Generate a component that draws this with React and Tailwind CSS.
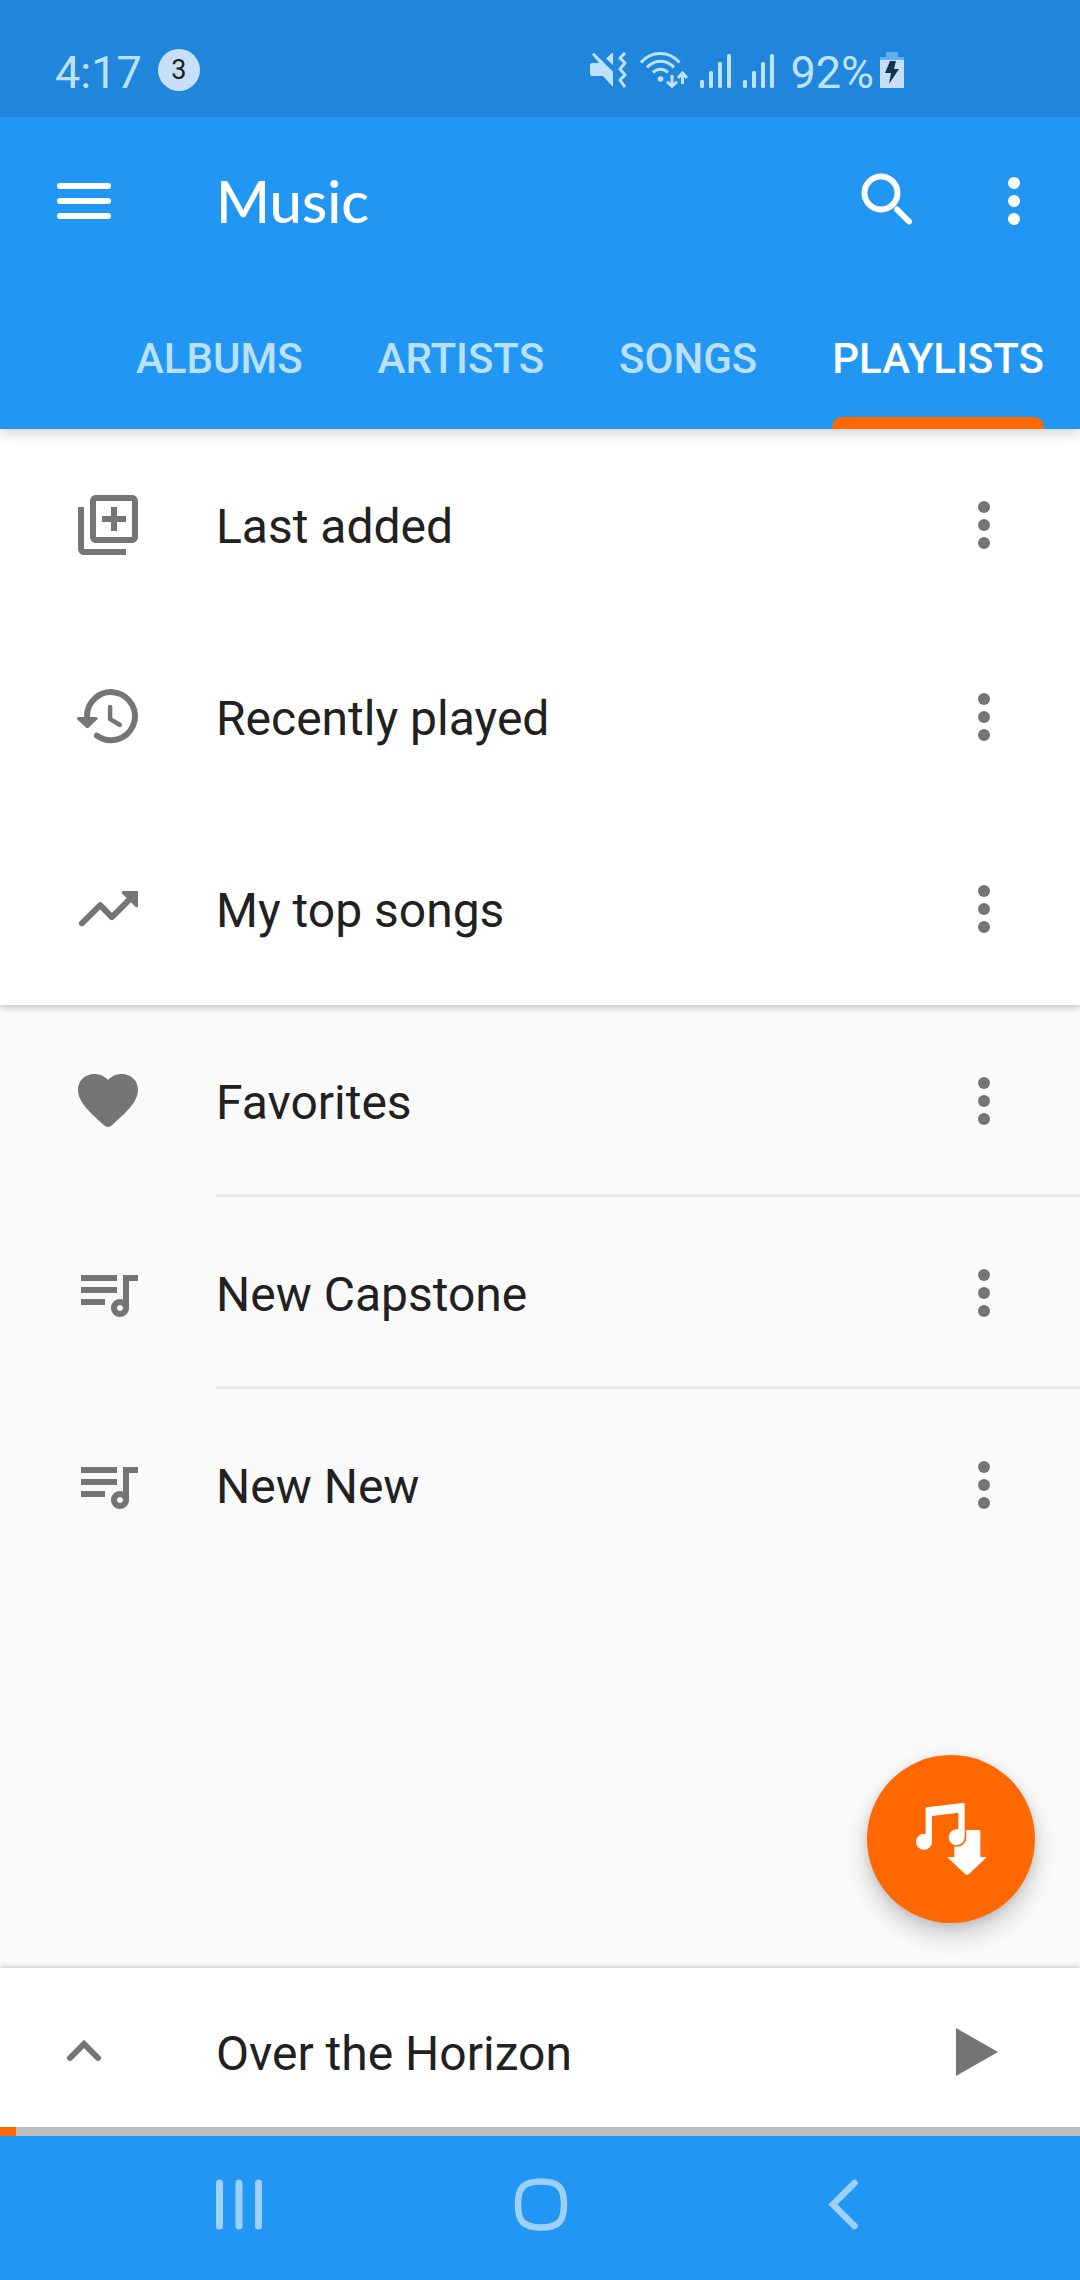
import React from "react";

function DotsIcon({ className }) {
  return (
    <svg viewBox="0 0 24 24" className={className} fill="currentColor" aria-hidden="true">
      <circle cx="12" cy="6" r="2" />
      <circle cx="12" cy="12" r="2" />
      <circle cx="12" cy="18" r="2" />
    </svg>
  );
}

function Icon({ children }) {
  return (
    <svg viewBox="0 0 24 24" className="size-18 shrink-0 text-[#757575]" fill="currentColor" aria-hidden="true">
      {children}
    </svg>
  );
}

function LibraryAddIcon() {
  return (
    <Icon>
      <path
        fillRule="evenodd"
        d="M8 2h12c1.1 0 2 .9 2 2v12c0 1.1-.9 2-2 2H8c-1.1 0-2-.9-2-2V4c0-1.1.9-2 2-2zm0 2v12h12V4H8z"
      />
      <path d="M2 6h2v14h14v2H4c-1.1 0-2-.9-2-2V6zM13 6h2v3h3v2h-3v3h-2v-3h-3V9h3V6z" />
    </Icon>
  );
}

function HistoryIcon() {
  return (
    <Icon>
      <path d="M5 12.5V12a8 8 0 1 1 3.3 6.2" fill="none" stroke="currentColor" strokeWidth="2" strokeLinecap="round" />
      <path d="M2.1 12h5.9c.5 0 .7.5.4.8l-2.9 2.8c-.3.2-.6.2-.8 0L1.8 12.8c-.3-.3-.1-.8.3-.8z" />
      <path d="M12.7 8.7v4l3.2 1.9" fill="none" stroke="currentColor" strokeWidth="1.5" strokeLinecap="round" strokeLinejoin="round" />
    </Icon>
  );
}

function TrendingIcon() {
  return (
    <Icon>
      <path d="M3.3 16.8l6.1-6.1 3.9 4 6-6" fill="none" stroke="currentColor" strokeWidth="2" strokeLinecap="round" strokeLinejoin="round" />
      <path d="M17.1 6H22v5c0 .4-.5.6-.8.3l-4.5-4.5c-.3-.3-.1-.8.4-.8z" />
    </Icon>
  );
}

function HeartIcon() {
  return (
    <Icon>
      <path d="M12 5C10.9 3.7 9.2 3 7.4 3 4.4 3 2 5.2 2 8.3c0 4.2 4.6 8 8.7 11.8.8.7 1.8.7 2.6 0C17.4 16.3 22 12.5 22 8.3 22 5.2 19.6 3 16.6 3c-1.8 0-3.5.7-4.6 2z" />
    </Icon>
  );
}

function QueueMusicIcon() {
  return (
    <Icon>
      <path
        fillRule="evenodd"
        d="M22 6h-5v8.18c-.31-.11-.65-.18-1-.18-1.66 0-3 1.34-3 3s1.34 3 3 3 3-1.34 3-3V8h3V6zM15 6H3v2h12V6zM15 10H3v2h12v-2zM11 14H3v2h8v-2zM17 17c0 .55-.45 1-1 1s-1-.45-1-1 .45-1 1-1 1 .45 1 1z"
      />
    </Icon>
  );
}

function MuteVibrateIcon() {
  return (
    <svg viewBox="0 0 38 40" className="h-10 w-[38px]" fill="currentColor" aria-hidden="true">
      <path d="M2 11h7L2 2.5 4 .8l19 19V35L13 24H2a2 2 0 0 1-2-2v-9a2 2 0 0 1 2-2z" />
      <path d="M16 6.5L22 1h1v12z" />
      <path d="M35 1l-5 5 5 5-5 6 5 6-5 5 5 7" fill="none" stroke="currentColor" strokeWidth="3" strokeLinejoin="round" />
    </svg>
  );
}

function WifiIcon() {
  return (
    <svg viewBox="0 0 48 40" className="h-10 w-12" fill="none" stroke="currentColor" strokeWidth="3" aria-hidden="true">
      <path d="M1 10.5c10.5-12 28-12 38.500 0M7 15.500c7.500-8.500 19.500-8.500 27 0M13 20.500c4-4.500 11-4.500 15 0" />
      <circle cx="20.5" cy="27" r="2.8" fill="currentColor" stroke="none" />
      <path d="M32 23v11M27 29.500l5 5 5-5M42.500 32V21M38 26l4.500-5 4.500 5" />
    </svg>
  );
}

function SignalIcon() {
  return (
    <svg viewBox="0 0 31 40" className="h-10 w-[31px]" fill="currentColor" aria-hidden="true">
      <rect x="0" y="28" width="4" height="8" rx="1.5" />
      <rect x="9" y="19" width="4" height="17" rx="1.5" />
      <rect x="18" y="10" width="4" height="26" rx="1.5" />
      <rect x="27" y="2" width="4" height="34" rx="1.5" />
    </svg>
  );
}

function BatteryIcon() {
  return (
    <svg viewBox="0 0 24 40" className="ml-1.5 h-10 w-6" aria-hidden="true">
      <path d="M6 1a1 1 0 0 1 1-1h10a1 1 0 0 1 1 1v4h5a1 1 0 0 1 1 1v2H0V6a1 1 0 0 1 1-1h5z" fill="#5faeee" />
      <path d="M0 8h24v27a1 1 0 0 1-1 1H1a1 1 0 0 1-1-1z" fill="#c7e0f7" />
      <path d="M10 9h6l-2 8h5L9 32l2-11H5z" fill="#17324c" />
    </svg>
  );
}

function StatusBar() {
  return (
    <div className="relative z-20 flex h-[117px] items-center bg-[#2086dc] pt-[27px] pr-44 pl-[55px] text-[45px] leading-none text-[#bfe2fc]">
      <span>4:17</span>
      <span className="mb-1 ml-4 flex size-[42px] items-center justify-center rounded-full bg-[#c7e0f7] text-[27px] text-[#212121]">
        3
      </span>
      <div className="ml-auto flex items-center gap-3">
        <MuteVibrateIcon />
        <WifiIcon />
        <SignalIcon />
        <SignalIcon />
        <span className="ml-1">92%</span>
      </div>
      <BatteryIcon />
    </div>
  );
}

const tabs = ["ALBUMS", "ARTISTS", "SONGS", "PLAYLISTS"];

function Header() {
  return (
    <header className="relative z-10 bg-[#2196f3] text-white shadow-[0_3px_14px_rgba(0,0,0,0.2)]">
      <div className="flex h-42 items-center pr-[30px] pl-12">
        <button type="button" aria-label="Open navigation" className="size-18">
          <svg viewBox="0 0 72 72" className="size-18" aria-hidden="true">
            <path d="M12 21h48M12 36h48M12 51h48" stroke="currentColor" strokeWidth="6" strokeLinecap="round" />
          </svg>
        </button>
        <h1 className="ml-24 flex-1 font-['Lato',sans-serif] text-[58px] leading-none font-medium">Music</h1>
        <button type="button" aria-label="Search" className="size-18">
          <svg viewBox="0 0 72 72" className="size-18" fill="none" stroke="currentColor" strokeWidth="6" strokeLinecap="round" aria-hidden="true">
            <circle cx="29" cy="28" r="16.5" />
            <path d="M45 44.5L57 56.5" />
          </svg>
        </button>
        <button type="button" aria-label="More options" className="ml-[54px] size-18">
          <DotsIcon className="size-18" />
        </button>
      </div>
      <div className="flex h-36 justify-end gap-[3px]" role="tablist">
        {tabs.map((tab) => {
          const active = tab === "PLAYLISTS";
          return (
            <button key={tab} type="button" role="tab" aria-selected={active} className="flex flex-col px-9">
              <span
                className={
                  active
                    ? "flex h-33 items-center pt-3.5 text-[42px] font-medium text-white"
                    : "flex h-33 items-center pt-3.5 text-[42px] font-medium text-[#b9e1fd]"
                }
              >
                {tab}
              </span>
              {active && <span className="h-3 w-full rounded-t-[10px] bg-[#ff6700]" />}
            </button>
          );
        })}
      </div>
    </header>
  );
}

function Row({ icon, title, divided }) {
  return (
    <li className="flex h-48 pl-18">
      <div className="flex w-36 items-center">{icon}</div>
      <div
        className={
          divided
            ? "flex flex-1 items-center border-b-3 border-[#e9e9e9] pt-[3px] pr-15"
            : "flex flex-1 items-center pr-15"
        }
      >
        <span className="flex-1 pt-[3px] text-[48px]">{title}</span>
        <button type="button" aria-label={"Options for " + title} className="size-18 text-[#757575]">
          <DotsIcon className="size-18" />
        </button>
      </div>
    </li>
  );
}

function Fab() {
  return (
    <button
      type="button"
      aria-label="Download music"
      className="absolute right-[45px] bottom-[45px] flex size-42 items-center justify-center rounded-full bg-[#ff6700] text-white shadow-[0_12px_24px_rgba(0,0,0,0.2),0_2px_8px_rgba(0,0,0,0.1)]"
    >
      <svg viewBox="213 237 240 240" className="size-20" fill="currentColor" aria-hidden="true">
        <path d="M343 330h74a4 4 0 0 1 4 4v77h14c3 0 4 2 2 4l-51 48c-3 3-7 3-10 0l-51-48c-2-2-1-4 2-4h16z" />
        <path
          d="M260 262l109-13c3 0 5 1 5 4v97a24 24 0 1 1-19-22v-50l-79 10v77a24 24 0 1 1-19-23v-76c0-2 1-4 3-4z"
          stroke="#ff6700"
          strokeWidth="10"
          paintOrder="stroke"
        />
      </svg>
    </button>
  );
}

function Player() {
  return (
    <section aria-label="Now playing" className="relative bg-white shadow-[0_-1px_5px_rgba(0,0,0,0.22)]">
      <div className="flex h-[159px] items-center pt-[9px] pr-[66px] pl-12">
        <button type="button" aria-label="Expand player" className="size-18 text-[#757575]">
          <svg viewBox="0 0 72 72" className="size-18" fill="none" stroke="currentColor" strokeWidth="6" strokeLinecap="round" aria-hidden="true">
            <path d="M22 42L36 28L50 42" />
          </svg>
        </button>
        <span className="ml-24 flex-1 pt-[3px] text-[48px]">Over the Horizon</span>
        <button type="button" aria-label="Play" className="size-18 text-[#757575]">
          <svg viewBox="0 0 72 72" className="size-18" fill="currentColor" aria-hidden="true">
            <path d="M14 12v48l42-24z" />
          </svg>
        </button>
      </div>
      <div className="h-[9px] bg-[#bdbdbd]" role="progressbar" aria-label="Track position" aria-valuenow={1.5}>
        <div className="h-full bg-[#ff6700]" style={{ width: "1.5%" }} />
      </div>
    </section>
  );
}

function SystemNav() {
  return (
    <nav aria-label="System" className="relative grid h-36 grid-cols-3 bg-[#2196f3] px-22 pb-2 text-[#9dd1fc]">
      <button type="button" aria-label="Recent apps" className="flex items-center justify-center">
        <svg viewBox="0 0 60 60" className="size-15" stroke="currentColor" strokeWidth="7" strokeLinecap="round" aria-hidden="true">
          <path d="M10.5 9v43M30 9v43M49.5 9v43" />
        </svg>
      </button>
      <button type="button" aria-label="Home" className="flex items-center justify-center">
        <svg viewBox="0 0 60 60" className="size-15" fill="none" stroke="currentColor" strokeWidth="6.5" aria-hidden="true">
          <path d="M31 7.500c17.500 0 23 6 23 23s-5.500 23-23 23-23-6-23-23 5.500-23 23-23z" />
        </svg>
      </button>
      <button type="button" aria-label="Back" className="flex items-center justify-center">
        <svg viewBox="0 0 60 60" className="size-15" fill="none" stroke="currentColor" strokeWidth="6.5" strokeLinecap="round" aria-hidden="true">
          <path d="M43.5 9L22 30.5L43.5 52" />
        </svg>
      </button>
    </nav>
  );
}

export default function App() {
  return (
    <div className="flex min-h-screen flex-col bg-[#fafafa] font-['Roboto',sans-serif] text-[#212121]">
      <StatusBar />
      <Header />
      <main className="relative flex-1">
        <ul className="bg-white shadow-[0_1px_8px_rgba(0,0,0,0.3)]">
          <Row icon={<LibraryAddIcon />} title="Last added" />
          <Row icon={<HistoryIcon />} title="Recently played" />
          <Row icon={<TrendingIcon />} title="My top songs" />
        </ul>
        <ul>
          <Row icon={<HeartIcon />} title="Favorites" divided />
          <Row icon={<QueueMusicIcon />} title="New Capstone" divided />
          <Row icon={<QueueMusicIcon />} title="New New" />
        </ul>
        <Fab />
      </main>
      <Player />
      <SystemNav />
    </div>
  );
}
